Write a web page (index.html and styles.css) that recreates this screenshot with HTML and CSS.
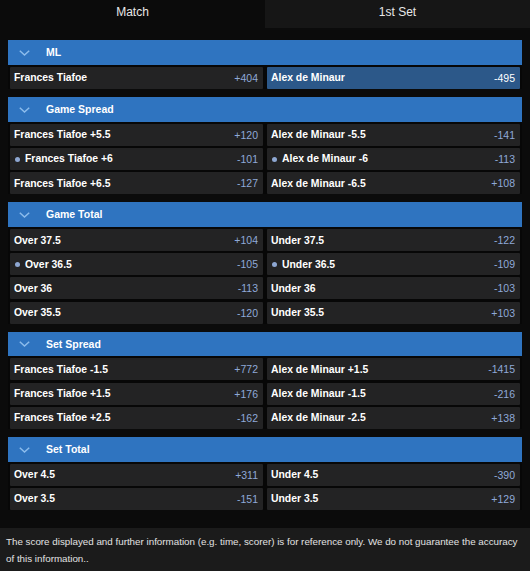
FILE: index.html
```html
<!DOCTYPE html>
<html lang="en">
<head>
    <meta charset="UTF-8">
    <meta name="viewport" content="width=device-width, initial-scale=1.0">
    <title>Frances Tiafoe vs Alex de Minaur</title>
    <link rel="stylesheet" href="styles.css">
</head>
<body>
    <nav class="tabs">
        <a href="#" class="tab active">Match</a>
        <a href="#" class="tab">1st Set</a>
    </nav>

    <main class="markets">
        <!-- ML -->
        <section class="market">
            <div class="market-head">
                <svg class="chevron" width="11" height="6" viewBox="0 0 11 6"><path d="M0.8 0.8 L5.5 5 L10.2 0.8" /></svg>
                <span>ML</span>
            </div>
            <div class="market-body">
                <div class="odd"><span class="name">Frances Tiafoe</span><span class="price">+404</span></div>
                <div class="odd selected"><span class="name">Alex de Minaur</span><span class="price">-495</span></div>
            </div>
        </section>

        <!-- Game Spread -->
        <section class="market">
            <div class="market-head">
                <svg class="chevron" width="11" height="6" viewBox="0 0 11 6"><path d="M0.8 0.8 L5.5 5 L10.2 0.8" /></svg>
                <span>Game Spread</span>
            </div>
            <div class="market-body">
                <div class="odd"><span class="name">Frances Tiafoe +5.5</span><span class="price">+120</span></div>
                <div class="odd"><span class="name">Alex de Minaur -5.5</span><span class="price">-141</span></div>
                <div class="odd main-line"><span class="name">Frances Tiafoe +6</span><span class="price">-101</span></div>
                <div class="odd main-line"><span class="name">Alex de Minaur -6</span><span class="price">-113</span></div>
                <div class="odd"><span class="name">Frances Tiafoe +6.5</span><span class="price">-127</span></div>
                <div class="odd"><span class="name">Alex de Minaur -6.5</span><span class="price">+108</span></div>
            </div>
        </section>

        <!-- Game Total -->
        <section class="market">
            <div class="market-head">
                <svg class="chevron" width="11" height="6" viewBox="0 0 11 6"><path d="M0.8 0.8 L5.5 5 L10.2 0.8" /></svg>
                <span>Game Total</span>
            </div>
            <div class="market-body">
                <div class="odd"><span class="name">Over 37.5</span><span class="price">+104</span></div>
                <div class="odd"><span class="name">Under 37.5</span><span class="price">-122</span></div>
                <div class="odd main-line"><span class="name">Over 36.5</span><span class="price">-105</span></div>
                <div class="odd main-line"><span class="name">Under 36.5</span><span class="price">-109</span></div>
                <div class="odd"><span class="name">Over 36</span><span class="price">-113</span></div>
                <div class="odd"><span class="name">Under 36</span><span class="price">-103</span></div>
                <div class="odd"><span class="name">Over 35.5</span><span class="price">-120</span></div>
                <div class="odd"><span class="name">Under 35.5</span><span class="price">+103</span></div>
            </div>
        </section>

        <!-- Set Spread -->
        <section class="market">
            <div class="market-head">
                <svg class="chevron" width="11" height="6" viewBox="0 0 11 6"><path d="M0.8 0.8 L5.5 5 L10.2 0.8" /></svg>
                <span>Set Spread</span>
            </div>
            <div class="market-body">
                <div class="odd"><span class="name">Frances Tiafoe -1.5</span><span class="price">+772</span></div>
                <div class="odd"><span class="name">Alex de Minaur +1.5</span><span class="price">-1415</span></div>
                <div class="odd"><span class="name">Frances Tiafoe +1.5</span><span class="price">+176</span></div>
                <div class="odd"><span class="name">Alex de Minaur -1.5</span><span class="price">-216</span></div>
                <div class="odd"><span class="name">Frances Tiafoe +2.5</span><span class="price">-162</span></div>
                <div class="odd"><span class="name">Alex de Minaur -2.5</span><span class="price">+138</span></div>
            </div>
        </section>

        <!-- Set Total -->
        <section class="market">
            <div class="market-head">
                <svg class="chevron" width="11" height="6" viewBox="0 0 11 6"><path d="M0.8 0.8 L5.5 5 L10.2 0.8" /></svg>
                <span>Set Total</span>
            </div>
            <div class="market-body">
                <div class="odd"><span class="name">Over 4.5</span><span class="price">+311</span></div>
                <div class="odd"><span class="name">Under 4.5</span><span class="price">-390</span></div>
                <div class="odd"><span class="name">Over 3.5</span><span class="price">-151</span></div>
                <div class="odd"><span class="name">Under 3.5</span><span class="price">+129</span></div>
            </div>
        </section>
    </main>

    <footer class="notice">
        <p>The score displayed and further information (e.g. time, scorer) is for reference only. We do not guarantee the accuracy of this information..</p>
    </footer>
</body>
</html>
```

FILE: styles.css
```css
/* 기본 설정 */
body, html {
    margin: 0;
    padding: 0;
    background-color: #0b0b0b;
    font-family: "Liberation Sans", Arial, sans-serif;
    color: #f2f2f2;
}

/* 탭 */
.tabs {
    display: flex;
    height: 28px;
}

.tab {
    flex: 1;
    display: flex;
    justify-content: center;
    align-items: center;
    padding-bottom: 4px;
    text-decoration: none;
    color: #e8e8e8;
    font-size: 12px;
    background-color: #161616;
}

.tab.active {
    background-color: #0b0b0b;
}

/* 마켓 목록 */
.markets {
    padding: 12px 8px 10px;
}

.market {
    margin-bottom: 8px;
}

.market-head {
    height: 24.7px;
    display: flex;
    align-items: center;
    background-color: #2f74c0;
    font-size: 10.5px;
    font-weight: bold;
    color: #ffffff;
}

.chevron {
    margin: 1px 16px 0 11px;
    fill: none;
    stroke: #8cbcec;
    stroke-width: 1.5;
}

.market-body {
    display: grid;
    grid-template-columns: 1fr 1fr;
    column-gap: 4px;
    row-gap: 2.2px;
    padding: 2.2px 2px 0;
    background-color: #070707;
}

.odd {
    height: 22px;
    display: flex;
    justify-content: space-between;
    align-items: center;
    padding: 0 5px 0 4px;
    background-color: #232324;
    border-radius: 1px;
}

.odd .name {
    font-size: 10.4px;
    font-weight: bold;
    color: #ffffff;
}

.odd .price {
    font-size: 10.5px;
    color: #8fa9d8;
}

.odd.selected {
    background-color: #2c5889;
}

.odd.selected .price {
    color: #ffffff;
}

/* 기준선 표시 점 */
.odd.main-line .name::before {
    content: "";
    display: inline-block;
    width: 5px;
    height: 5px;
    margin: 0 5px 1px 1px;
    border-radius: 50%;
    background-color: #8ea7d2;
    vertical-align: middle;
}

/* 안내 문구 */
.notice {
    background-color: #1b1b1b;
    padding: 5px 4px 10px 6px;
}

.notice p {
    margin: 0;
    font-size: 9.8px;
    line-height: 17px;
    color: #e2e2e2;
}
```
